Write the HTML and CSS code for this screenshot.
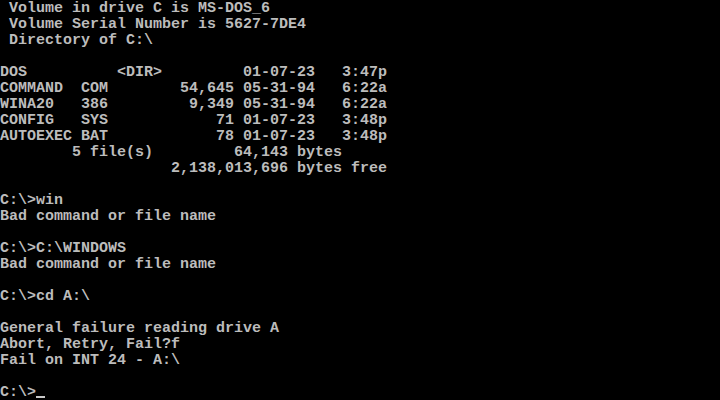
FILE: index.html
```html
<!DOCTYPE html>
<html>
<head>
<meta charset="utf-8">
<link rel="stylesheet" href="styles.css">
</head>
<body>
<pre class="screen"> Volume in drive C is MS-DOS_6
 Volume Serial Number is 5627-7DE4
 Directory of C:\

DOS          &lt;DIR&gt;         01-07-23   3:47p
COMMAND  COM        54,645 05-31-94   6:22a
WINA20   386         9,349 05-31-94   6:22a
CONFIG   SYS            71 01-07-23   3:48p
AUTOEXEC BAT            78 01-07-23   3:48p
        5 file(s)         64,143 bytes
                   2,138,013,696 bytes free

C:\&gt;win
Bad command or file name

C:\&gt;C:\WINDOWS
Bad command or file name

C:\&gt;cd A:\

General failure reading drive A
Abort, Retry, Fail?f
Fail on INT 24 - A:\

C:\&gt;<span class="cursor"></span></pre>
</body>
</html>
```
FILE: styles.css
```css
html, body {
  margin: 0;
  padding: 0;
  background: #000;
  width: 720px;
  height: 400px;
  overflow: hidden;
}
.screen {
  margin: 0;
  padding: 1px 0 0 0;
  font-family: "Liberation Mono", monospace;
  font-size: 15px;
  line-height: 16px;
  font-weight: bold;
  color: #bcbcbc;
  white-space: pre;
}
.cursor {
  display: inline-block;
  width: 9px;
  height: 2px;
  background: #c8c8c8;
  vertical-align: -2px;
}
```
